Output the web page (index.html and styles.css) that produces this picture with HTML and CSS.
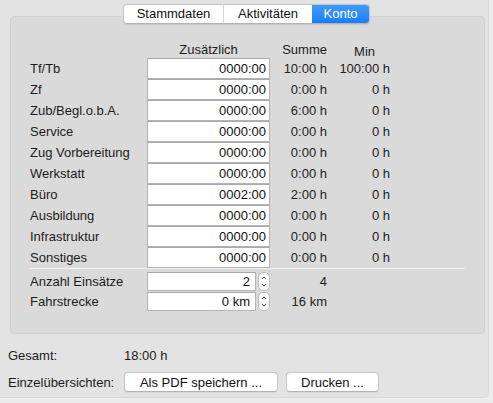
FILE: index.html
```html
<!DOCTYPE html>
<html lang="de">
<head>
<meta charset="utf-8">
<title>Konto</title>
<link rel="stylesheet" href="styles.css">
</head>
<body>
<div class="window">
  <div class="tabs">
    <div class="seg">
      <span class="tab t1">Stammdaten</span>
      <span class="tab t2">Aktivitäten</span>
      <span class="tab t3 active">Konto</span>
    </div>
  </div>
  <div class="panel">
    <div class="grid">
      <div></div><div class="h hz">Zusätzlich</div><div class="h hs">Summe</div><div class="h hm">Min</div>

      <div class="lbl">Tf/Tb</div><div class="field">0000:00</div><div class="num">10:00 h</div><div class="num">100:00 h</div>
      <div class="lbl">Zf</div><div class="field">0000:00</div><div class="num">0:00 h</div><div class="num">0 h</div>
      <div class="lbl">Zub/Begl.o.b.A.</div><div class="field">0000:00</div><div class="num">6:00 h</div><div class="num">0 h</div>
      <div class="lbl">Service</div><div class="field">0000:00</div><div class="num">0:00 h</div><div class="num">0 h</div>
      <div class="lbl">Zug Vorbereitung</div><div class="field">0000:00</div><div class="num">0:00 h</div><div class="num">0 h</div>
      <div class="lbl">Werkstatt</div><div class="field">0000:00</div><div class="num">0:00 h</div><div class="num">0 h</div>
      <div class="lbl">Büro</div><div class="field">0002:00</div><div class="num">2:00 h</div><div class="num">0 h</div>
      <div class="lbl">Ausbildung</div><div class="field">0000:00</div><div class="num">0:00 h</div><div class="num">0 h</div>
      <div class="lbl">Infrastruktur</div><div class="field">0000:00</div><div class="num">0:00 h</div><div class="num">0 h</div>
      <div class="lbl">Sonstiges</div><div class="field">0000:00</div><div class="num">0:00 h</div><div class="num">0 h</div>
    </div>
    <div class="sep"></div>
    <div class="grid2">
      <div class="lbl">Anzahl Einsätze</div>
      <div class="combo">
        <div class="field sm">2</div>
        <div class="stepper"><svg width="11" height="19" viewBox="0 0 11 19"><path d="M3.3 6.6 L5.5 4.4 L7.7 6.6" fill="none" stroke="#4a4a4a" stroke-width="1.1"/><path d="M3.3 12.4 L5.5 14.6 L7.7 12.4" fill="none" stroke="#4a4a4a" stroke-width="1.1"/></svg></div>
      </div>
      <div class="num">4</div>

      <div class="lbl">Fahrstrecke</div>
      <div class="combo">
        <div class="field sm">0 km</div>
        <div class="stepper"><svg width="11" height="19" viewBox="0 0 11 19"><path d="M3.3 6.6 L5.5 4.4 L7.7 6.6" fill="none" stroke="#4a4a4a" stroke-width="1.1"/><path d="M3.3 12.4 L5.5 14.6 L7.7 12.4" fill="none" stroke="#4a4a4a" stroke-width="1.1"/></svg></div>
      </div>
      <div class="num">16 km</div>
    </div>
  </div>
  <div class="footer">
    <div class="flbl">Gesamt:</div><div class="fval">18:00 h</div>
    <div class="flbl">Einzelübersichten:</div>
    <div class="btns"><button class="btn b1">Als PDF speichern ...</button><button class="btn b2">Drucken ...</button></div>
  </div>
</div>
</body>
</html>
```

FILE: styles.css
```css
html, body {
  margin: 0;
  padding: 0;
  background: #ececec;
}
body {
  font-family: "Liberation Sans", Arial, sans-serif;
  font-size: 13px;
  color: #1c1c1c;
}
.window {
  box-sizing: border-box;
  width: 489px;
  height: 398px;
  background: #e3e3e3;
  border-right: 1px solid #d8d8d8;
  border-bottom: 1px solid #d8d8d8;
  border-bottom-right-radius: 5px;
  padding-top: 4px;
}
.tabs {
  display: flex;
  padding-left: 123px;
  position: relative;
  z-index: 1;
}
.seg {
  display: flex;
  height: 20px;
  box-sizing: border-box;
  border: 1px solid #c4c4c4;
  border-bottom-color: #b4b4b4;
  border-radius: 4px;
  background: #fff;
  box-shadow: 0 0.5px 1px rgba(0,0,0,0.08);
  overflow: hidden;
}
.tab {
  display: flex;
  align-items: center;
  justify-content: center;
  line-height: 18px;
  color: #111;
}
.t1 { width: 99px; border-right: 1px solid #d6d6d6; }
.t2 { width: 88px; }
.t3 { width: 57px; }
.active {
  background: linear-gradient(#3f9bfd, #1a7ef9);
  color: #fff;
}
.panel {
  box-sizing: border-box;
  margin: -8px 0 0 10px;
  width: 475px;
  background: #dadada;
  border: 1px solid #d0d0d0;
  border-radius: 4px;
  padding: 24px 0 22px 19px;
}
.grid {
  display: grid;
  grid-template-columns: 117px 123px 57px 63px;
  grid-template-rows: 17px repeat(10, 21px);
}
.h {
  display: flex;
  align-items: center;
  color: #1c1c1c;
}
.hz { justify-content: center; }
.hs { justify-content: flex-end; }
.hm { justify-content: flex-end; padding-right: 15px; padding-top: 4px; }
.lbl {
  display: flex;
  align-items: center;
  color: #1c1c1c;
}
.field {
  box-sizing: border-box;
  height: 21px;
  background: #fff;
  border: 1px solid #b3b3b3;
  border-top-color: #a9a9a9;
  display: flex;
  align-items: center;
  justify-content: flex-end;
  padding-right: 3px;
  color: #111;
}
.num {
  display: flex;
  align-items: center;
  justify-content: flex-end;
  color: #222;
}
.sep {
  width: 435px;
  height: 1px;
  background: #f2f2f2;
  margin-bottom: 3px;
}
.grid2 {
  display: grid;
  grid-template-columns: 117px 123px 57px;
  grid-template-rows: 19px 19px;
  row-gap: 1px;
}
.combo {
  display: flex;
  align-items: stretch;
  gap: 2px;
}
.field.sm {
  width: 109px;
  height: 19px;
  padding-right: 5px;
}
.stepper {
  box-sizing: border-box;
  width: 12px;
  height: 19px;
  background: #fff;
  border: 1px solid #bdbdbd;
  border-radius: 5px;
  display: flex;
  align-items: center;
  justify-content: center;
}
.stepper svg { display: block; }
.footer {
  display: grid;
  grid-template-columns: 116px auto;
  grid-template-rows: 16px 20px;
  row-gap: 9px;
  margin-top: 13px;
  padding-left: 8px;
  align-items: center;
}
.flbl, .fval { color: #1c1c1c; }
.fval { padding-left: -1px; }
.btns {
  display: flex;
  gap: 8px;
}
.btn {
  box-sizing: border-box;
  height: 20px;
  background: #fff;
  border: 1px solid #c6c6c6;
  border-bottom-color: #b2b2b2;
  border-radius: 4px;
  font-family: "Liberation Sans", Arial, sans-serif;
  font-size: 13px;
  color: #111;
  padding: 0;
  box-shadow: 0 0.5px 1px rgba(0,0,0,0.06);
}
.b1 { width: 154px; }
.b2 { width: 93px; }
```
